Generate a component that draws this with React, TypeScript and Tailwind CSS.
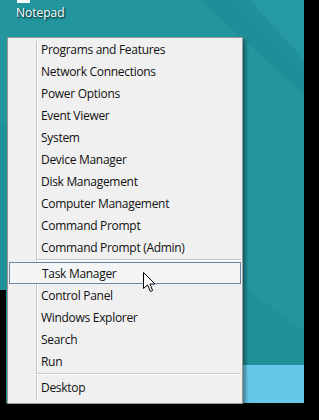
import React from 'react';

const groups: string[][] = [
  [
    'Programs and Features',
    'Network Connections',
    'Power Options',
    'Event Viewer',
    'System',
    'Device Manager',
    'Disk Management',
    'Computer Management',
    'Command Prompt',
    'Command Prompt (Admin)',
  ],
  ['Task Manager', 'Control Panel', 'Windows Explorer', 'Search', 'Run'],
  ['Desktop'],
];

const font = { fontFamily: '"Open Sans", "Noto Sans", sans-serif' };

const Cursor = () => (
  <svg width="13" height="21" viewBox="0 0 13 21" className="absolute left-[143px] top-[272px]">
    <path
      d="M0.5 0.5 L0.5 16.5 L4.5 12.8 L7.3 19.5 L9.6 18.5 L6.9 12 L12 12 Z"
      fill="#ffffff"
      stroke="#000000"
      strokeWidth="1"
    />
  </svg>
);

const Separator = () => (
  <div className="h-[4px] flex flex-col justify-center pl-[28px] pr-[1px]">
    <div className="h-px bg-[#c5c5c5]" />
    <div className="h-px bg-white" />
  </div>
);

const Item = ({ label, selected }: { label: string; selected?: boolean }) => (
  <div
    className={
      selected
        ? 'h-[22px] mx-px flex items-center pl-[32px] pt-[2px] border border-[#6e85a3] bg-[#f4f5f7]'
        : 'h-[22px] flex items-center pl-[33px] pt-[2px]'
    }
  >
    <span className="text-[12px] leading-none text-[#111] tracking-[-0.3px]">{label}</span>
  </div>
);

const StartMenu = () => (
  <div
    className="absolute left-[7px] top-[37px] w-[236px] h-[367px] bg-[#f0f0f0] border border-[#979797] shadow-[3px_3px_3px_rgba(0,0,0,0.35)]"
    style={font}
  >
    {/* gutter line */}
    <div className="absolute left-[28px] top-[3px] bottom-[3px] w-[2px] flex">
      <div className="w-px bg-[#c5c5c5]" />
      <div className="w-px bg-white" />
    </div>
    <div className="relative flex flex-col">
      {groups.map((g, gi) => (
        <React.Fragment key={gi}>
          {gi > 0 && <Separator />}
          {g.map((label) => (
            <Item key={label} label={label} selected={label === 'Task Manager'} />
          ))}
        </React.Fragment>
      ))}
    </div>
  </div>
);

export default function App() {
  return (
    <div className="relative w-[319px] h-[420px] bg-black overflow-hidden">
      {/* desktop */}
      <div className="relative w-[304px] h-[403px] bg-[#22959d] overflow-hidden flex flex-col">
        <svg width="304" height="403" className="absolute inset-0">
          <polygon points="0,0 230,0 304,70 304,0" fill="#2a9ea6" opacity="0.6" />
          <polygon points="0,120 304,330 304,403 0,403" fill="#1f8e97" opacity="0.7" />
          <polygon points="200,0 304,95 304,60 250,0" fill="#1d8c95" opacity="0.6" />
        </svg>
        {/* notepad shortcut */}
        <div className="relative flex flex-col items-start pl-[16px] h-[290px]" style={font}>
          <div className="ml-px w-[13px] h-[3px] bg-white" />
          <div className="mt-[2px] text-[12px] text-white leading-[16px] [text-shadow:1px_1px_2px_rgba(0,0,0,0.9)]">
            Notepad
          </div>
        </div>
        <div className="relative flex flex-1">
          <div className="w-[6px] bg-black" />
          <div className="flex-1 flex flex-col justify-end">
            <div className="ml-[141px] h-[38px] bg-[#66c8e8]" />
          </div>
        </div>
      </div>
      <StartMenu />
      <Cursor />
    </div>
  );
}
